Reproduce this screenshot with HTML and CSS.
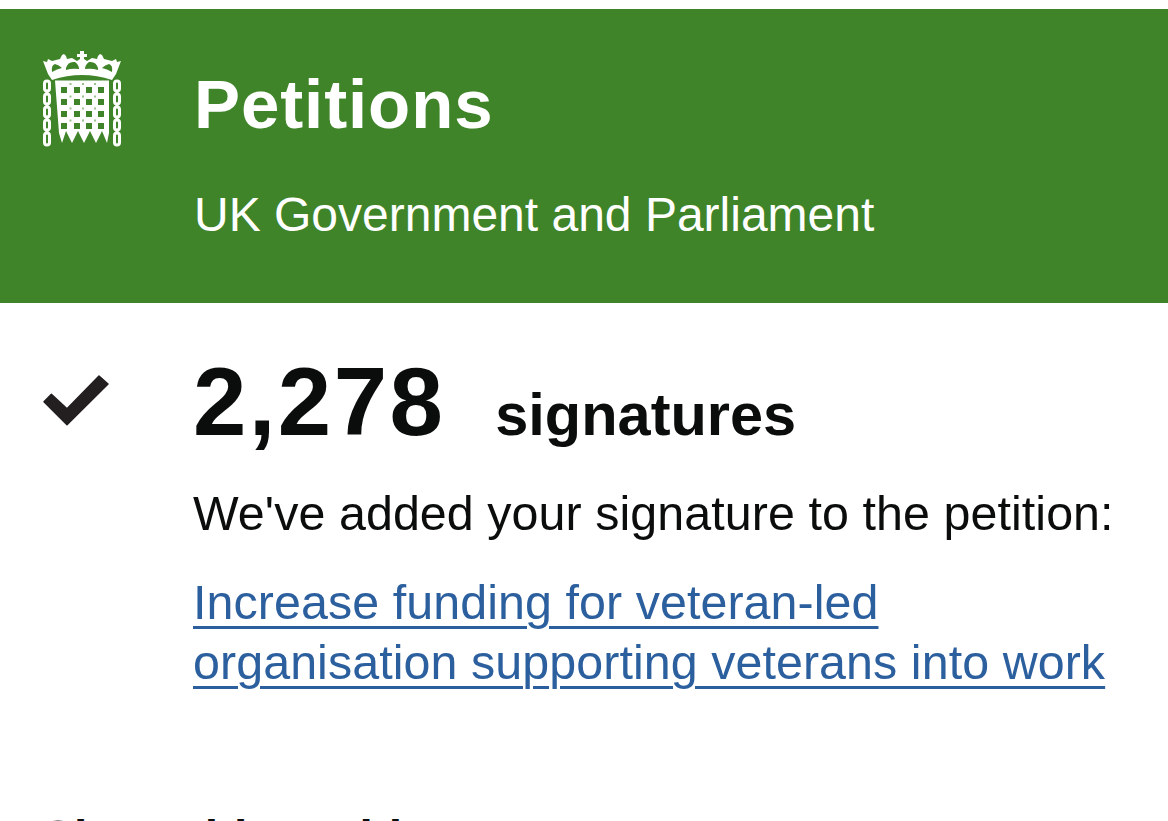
FILE: index.html
```html
<!DOCTYPE html>
<html lang="en">
<head>
    <meta charset="UTF-8">
    <meta name="viewport" content="width=device-width, initial-scale=1.0">
    <title>Petitions - UK Government and Parliament</title>
    <link rel="stylesheet" href="styles.css">
</head>
<body>
    <header class="site-header">
        <svg class="portcullis" viewBox="0 0 80 97" aria-hidden="true">
            <!-- crown -->
            <path fill="#fff" fill-rule="evenodd" d="M10 29 6 23 1 10l4 1 1-3 4 2 4-1 4-1 2-4 2-1 2 2 1 3 5-1 5 3 3-2V6h-3V3h3V0h4v3h3v3h-3v2l3 2 5-3 5 1 1-3 2-2 2 1 2 4 4 1 4 1 4-2 1 3 4-1-5 13-4 6Q40 19 10 29zM24 17q2-7 9-6 4 3 4 7-7-1-13 1zM56 17q-2-7-9-6-4 3-4 7 7-1 13 1zM10 21q-1-7 3-8 4 1 7 4-5 1-10 4zM70 21q1-7-3-8-4 1-7 4 5 1 10 4z"/>
            <!-- gate -->
            <path fill="#fff" fill-rule="evenodd" d="M13 29.500h54V82l-2 10-5-12-6 12-6-12-6 12-6-12-6 12-6-12-4 12-3-10zM19 36v6h6v-6zm13 0v6h6v-6zm12 0v6h6v-6zm12 0v6h6v-6zM19 48v6h6v-6zm13 0v6h6v-6zm12 0v6h6v-6zm12 0v6h6v-6zM19 60v6h6v-6zm13 0v6h6v-6zm12 0v6h6v-6zm12 0v6h6v-6zM19 72v6h6v-6zm13 0v6h6v-6zm12 0v6h6v-6zm12 0v6h6v-6z"/>
            <g fill="#9dc08f">
                <rect x="27.500" y="32" width="2" height="2"/><rect x="40" y="32" width="2" height="2"/><rect x="52" y="32" width="2" height="2"/>
                <rect x="27.500" y="44.500" width="2" height="2"/><rect x="40" y="44.500" width="2" height="2"/><rect x="52" y="44.500" width="2" height="2"/>
                <rect x="27.500" y="56.500" width="2" height="2"/><rect x="40" y="56.500" width="2" height="2"/><rect x="52" y="56.500" width="2" height="2"/>
                <rect x="27.500" y="68.500" width="2" height="2"/><rect x="40" y="68.500" width="2" height="2"/><rect x="52" y="68.500" width="2" height="2"/>
            </g>
            <!-- chains -->
            <g fill="none" stroke="#fff" stroke-width="3">
                <rect x="2.500" y="30" width="5" height="10" rx="2.500"/>
                <rect x="2.500" y="43" width="5" height="10" rx="2.500"/>
                <rect x="2.500" y="56" width="5" height="10" rx="2.500"/>
                <rect x="2.500" y="69" width="5" height="10" rx="2.500"/>
                <rect x="2.500" y="82" width="5" height="12" rx="2.500"/>
                <rect x="72.500" y="30" width="5" height="10" rx="2.500"/>
                <rect x="72.500" y="43" width="5" height="10" rx="2.500"/>
                <rect x="72.500" y="56" width="5" height="10" rx="2.500"/>
                <rect x="72.500" y="69" width="5" height="10" rx="2.500"/>
                <rect x="72.500" y="82" width="5" height="12" rx="2.500"/>
            </g>
            <g fill="#fff">
                <rect x="3.500" y="39" width="3" height="5"/>
                <rect x="3.500" y="52" width="3" height="5"/>
                <rect x="3.500" y="65" width="3" height="5"/>
                <rect x="3.500" y="78" width="3" height="5"/>
                <rect x="73.500" y="39" width="3" height="5"/>
                <rect x="73.500" y="52" width="3" height="5"/>
                <rect x="73.500" y="65" width="3" height="5"/>
                <rect x="73.500" y="78" width="3" height="5"/>
            </g>
        </svg>
        <div class="header-text">
            <div class="site-title">Petitions</div>
            <div class="site-sub">UK Government and Parliament</div>
        </div>
    </header>

    <main class="content">
        <div class="signed">
            <svg class="tick" viewBox="0 0 66 51" aria-hidden="true">
                <path fill="#231f20" stroke="#231f20" stroke-width="1.500" stroke-linejoin="round" d="M1 26.700 8.400 19.300 24 33.700 56 1 65 9 24 49.700z"/>
            </svg>
            <div class="signed-body">
                <div class="count"><span class="count-num">2,278</span><span class="count-label">signatures</span></div>
                <p class="added">We've added your signature to the petition:</p>
                <a class="petition-link" href="#">Increase funding for veteran-led organisation supporting veterans into work</a>
            </div>
        </div>
        <h2 class="share">Share this petition</h2>
    </main>
</body>
</html>
```

FILE: styles.css
```css
html, body { height: 100%; overflow: hidden; }
body { margin: 0; padding-top: 9px; background-color: #fff; color: #0b0c0c; font-family: "Liberation Sans", Arial, sans-serif; }

.site-header { display: flex; height: 294px; box-sizing: border-box; padding: 42px 0 0 42px; background-color: #3f8428; color: #fff; }
.portcullis { width: 80px; height: 97px; flex-shrink: 0; }
.header-text { margin-left: 72px; }
.site-title { font-size: 69px; font-weight: bold; line-height: 80px; letter-spacing: 0.9px; margin-top: 14px; }
.site-sub { font-size: 48px; line-height: 54px; margin-top: 43px; }

.content { padding: 49px 42px 0; }
.signed { display: flex; }
.tick { width: 66px; height: 51px; margin: 23px 0 0 1px; flex-shrink: 0; }
.signed-body { margin-left: 84px; width: 930px; }
.count { display: flex; align-items: baseline; height: 100px; }
.count-num { font-size: 96px; font-weight: bold; line-height: 100px; letter-spacing: 2.400px; }
.count-label { font-size: 59.500px; font-weight: bold; margin-left: 50px; }
.added { font-size: 48.400px; line-height: 60px; letter-spacing: 0.07px; margin: 31px 0 0; }
.petition-link { display: block; font-size: 48.400px; line-height: 60px; letter-spacing: 0.07px; margin-top: 29px; color: #2b5f9e; text-decoration: underline; text-decoration-thickness: 3px; text-underline-offset: 7px; }
.share { font-size: 48px; font-weight: bold; margin: 116px 0 0; line-height: 60px; }
```
